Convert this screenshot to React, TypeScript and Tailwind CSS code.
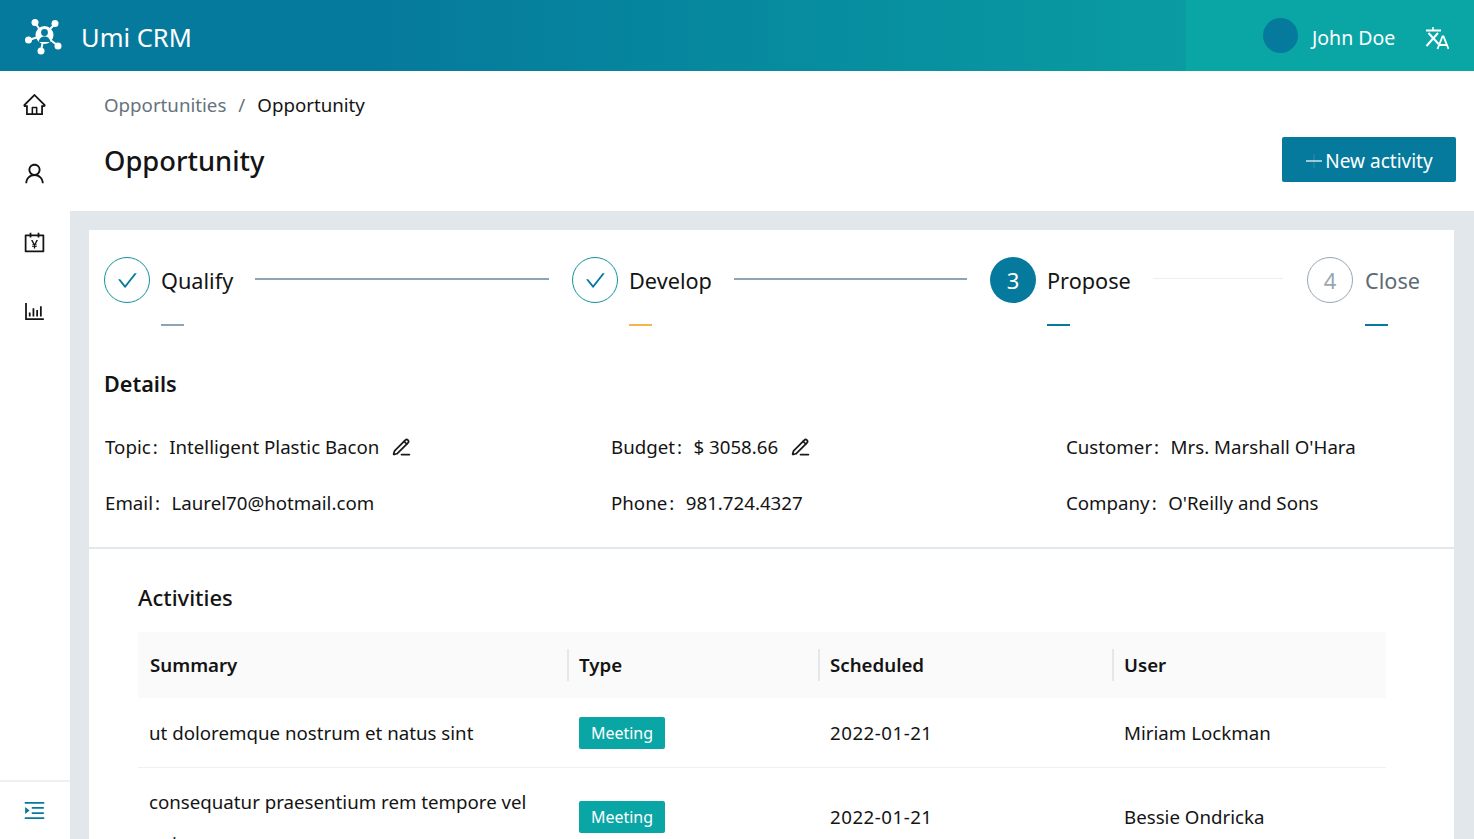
import { AiOutlineHome, AiOutlineUser, AiOutlineAccountBook, AiOutlineBarChart, AiOutlineMenuUnfold, AiOutlineCheck } from "react-icons/ai";
import { LuPencilLine } from "react-icons/lu";

const Logo = () => (
  <svg width="40" height="38" viewBox="0 0 40 38" fill="none" className="text-white">
    <g stroke="currentColor" strokeWidth="2">
      <line x1="20" y1="18" x2="11" y2="6" />
      <line x1="20" y1="18" x2="31" y2="7" />
      <line x1="20" y1="18" x2="5" y2="23" />
      <line x1="20" y1="18" x2="33" y2="28" />
      <line x1="20" y1="18" x2="17" y2="34" />
    </g>
    <g fill="currentColor">
      <circle cx="11" cy="5.500" r="3.500" />
      <circle cx="31" cy="6.500" r="3.500" />
      <circle cx="4.500" cy="23" r="3.500" />
      <circle cx="34" cy="29" r="3.500" />
      <circle cx="17" cy="34" r="3.500" />
      <circle cx="20.500" cy="18" r="9" />
    </g>
    <circle cx="20.500" cy="15.500" r="3.400" fill="#067a9c" />
    <path d="M14.500 25c1-4 3-5.500 6-5.500s5 1.500 6 5.500z" fill="#067a9c" />
  </svg>
);

const Translate = () => (
  <svg width="24" height="24" viewBox="0 0 24 24" fill="none" stroke="white" strokeWidth="2" className="ml-[30px] mt-[5px]">
    <path d="M1 4.500h15" />
    <path d="M8 1v3.500" strokeWidth="1.500" />
    <path d="M3.500 7l10 11" />
    <path d="M13 7L1.500 20" />
    <path d="M12.500 23l5-12.500h1l5 12.500M14.500 19h7" strokeWidth="1.800" />
  </svg>
);

const Step = ({ node, label, labelClass, lineClass, barClass, gap }: { node: React.ReactNode; label: string; labelClass: string; lineClass?: string; barClass: string; gap: string }) => (
  <div className={`flex items-start ${gap}`}>
    {node}
    <div className="ml-[11px] shrink-0 pt-[6px]">
      <div className={`text-[21.7px] leading-[36px] ${labelClass}`}>{label}</div>
      <div className={`mt-[25px] h-[2px] w-[23px] ${barClass}`} />
    </div>
    {lineClass && <div className={`mt-[21px] ml-[22px] ${lineClass}`} />}
  </div>
);

const Check = () => (
  <div className="flex h-[46px] w-[46px] shrink-0 items-center justify-center rounded-full border-[1.5px] border-[#12929f] text-[#067a9c]">
    <AiOutlineCheck size={23} />
  </div>
);

const Field = ({ label, value, edit, w }: { label: string; value: string; edit?: boolean; w: string }) => (
  <div className={`flex h-[56px] items-center pl-[1px] ${w}`}>
    <span>{label}<span className="ml-[2px]">:</span></span>
    <span className="ml-[11.5px]">{value}</span>
    {edit && <LuPencilLine size={21} className="ml-[12px] text-[#1a1a1a]" strokeWidth={2} />}
  </div>
);

const Row = ({ summary, user, h, first }: { summary: string; user: string; h: string; first?: boolean }) => (
  <tr className={`border-b border-[#eef1f3] ${h}`}>
    {first ? (
      <td className="pl-[11px] pr-[30px] pt-[2px] align-middle">{summary}</td>
    ) : (
      <td className="pl-[11px] pr-[30px] pt-[13px] align-top leading-[42px]">{summary}</td>
    )}
    <td className={`pl-[12px] align-middle ${first ? "pt-[2px]" : ""}`}>
      <span className="inline-flex h-[32px] w-[86px] items-center justify-center rounded-[2px] bg-[#0aa6a6] text-[16px] text-white">Meeting</span>
    </td>
    <td className={`pl-[12px] align-middle tracking-[0.5px] ${first ? "pt-[2px]" : ""}`}>2022-01-21</td>
    <td className={`pl-[12px] align-middle ${first ? "pt-[2px]" : ""}`}>{user}</td>
  </tr>
);

const Th = ({ children, sep, w }: { children: string; sep?: boolean; w: string }) => (
  <th className={`${w} relative p-0 pl-[12px] text-left font-semibold`}>
    {sep && <span className="absolute left-0 top-[17px] h-[32px] w-[2px] bg-[#e4e8ea]" />}
    {children}
  </th>
);

export default function App() {
  return (
    <div className="flex h-[839px] flex-col overflow-hidden bg-[#e1e7ea] text-[#141414] [font-family:'Noto_Sans','Open_Sans',sans-serif] text-[18.7px]">
      <header className="flex h-[71px] shrink-0 items-center">
        <div className="flex h-full flex-1 items-center bg-gradient-to-r from-[#067a9c] from-[32%] to-[#0a9ca2] pl-[24px]">
          <Logo />
          <span className="ml-[17px] mt-[3px] text-[25.5px] text-white">Umi CRM</span>
        </div>
        <div className="flex h-full w-[288px] items-center bg-[#0aa6a6] pl-[77px] text-white">
          <span className="h-[35px] w-[35px] rounded-full bg-[#067a9c]" />
          <span className="ml-[14px] mt-[4px] text-[19.5px]">John Doe</span>
          <Translate />
        </div>
      </header>
      <div className="flex min-h-0 flex-1">
        <aside className="flex w-[70px] shrink-0 flex-col bg-white">
          <nav className="flex flex-1 flex-col items-center gap-[44px] pt-[21px] pr-[2px] text-[#141414]">
            <AiOutlineHome size={25} />
            <AiOutlineUser size={25} />
            <AiOutlineAccountBook size={25} />
            <AiOutlineBarChart size={25} />
          </nav>
          <div className="flex h-[59px] items-center justify-center border-t-2 border-[#eef1f3] pr-[2px] text-[#067a9c]">
            <AiOutlineMenuUnfold size={25} />
          </div>
        </aside>
        <main className="min-w-0 flex-1">
          <section className="h-[140px] bg-white pl-[34px] pr-[18px] pt-[19px]">
            <div className="flex h-[30px] items-center">
              <span className="text-[#66727c]">Opportunities</span>
              <span className="mx-[12px] text-[#66727c]">/</span>
              <span>Opportunity</span>
            </div>
            <div className="mt-[17px] flex items-start justify-between">
              <h1 className="mt-[5px] text-[27.3px] font-medium leading-[38px]">Opportunity</h1>
              <button className="flex h-[45px] w-[174px] items-center justify-center rounded-[2px] bg-[#067a9c] pt-[3px] text-[19px] text-white">
                <svg width="18" height="18" viewBox="0 0 18 18" className="mr-[2px]">
                  <line x1="1" y1="9" x2="17" y2="9" stroke="white" strokeWidth="1.2" />
                  <line x1="9" y1="2" x2="9" y2="16" stroke="white" strokeOpacity="0.15" strokeWidth="1" />
                </svg>
                New activity
              </button>
            </div>
          </section>
          <div className="pl-[19px] pr-[20px] pt-[19px]">
            <section className="h-[317px] bg-white px-[15px] pt-[27px]">
              <div className="flex">
                <Step gap="w-[468px]" node={<Check />} label="Qualify" labelClass="" lineClass="mr-[23px] h-[2px] flex-1 bg-[#8ea3b3]" barClass="bg-[#8ea3b3]" />
                <Step gap="w-[418px]" node={<Check />} label="Develop" labelClass="" lineClass="mr-[23px] h-[2px] flex-1 bg-[#8ea3b3]" barClass="bg-[#f5b54a]" />
                <Step gap="w-[317px]" node={<div className="flex h-[46px] w-[46px] shrink-0 items-center justify-center rounded-full bg-[#067a9c] text-[22px] text-white">3</div>} label="Propose" labelClass="" lineClass="mr-[24px] h-[1px] flex-1 bg-[#eceff1]" barClass="bg-[#067a9c]" />
                <Step gap="" node={<div className="flex h-[46px] w-[46px] shrink-0 items-center justify-center rounded-full border-[1.5px] border-[#97a6b3] text-[22px] text-[#97a6b3]">4</div>} label="Close" labelClass="ml-[1px] text-[#5d6b75]" barClass="ml-[1px] bg-[#067a9c]" />
              </div>
              <h2 className="mt-[43px] text-[21.6px] font-semibold leading-[30px]">Details</h2>
              <div className="mt-[20px] flex flex-wrap">
                <Field w="w-[506px]" label="Topic" value="Intelligent Plastic Bacon" edit />
                <Field w="w-[455px]" label="Budget" value="$ 3058.66" edit />
                <Field w="w-[330px]" label="Customer" value="Mrs. Marshall O'Hara" />
                <Field w="w-[506px]" label="Email" value="Laurel70@hotmail.com" />
                <Field w="w-[455px]" label="Phone" value="981.724.4327" />
                <Field w="w-[330px]" label="Company" value="O'Reilly and Sons" />
              </div>
            </section>
            <section className="mt-[2px] h-[400px] bg-white pl-[49px] pr-[68px] pt-[32px]">
              <h2 className="text-[22px] font-medium leading-[32px]">Activities</h2>
              <table className="mt-[19px] w-full table-fixed border-collapse">
                <thead>
                  <tr className="h-[66px] bg-[#fafafa]">
                    <Th w="w-[429px]">Summary</Th>
                    <Th w="w-[251px]" sep>Type</Th>
                    <Th w="w-[294px]" sep>Scheduled</Th>
                    <Th w="w-[274px]" sep>User</Th>
                  </tr>
                </thead>
                <tbody>
                  <Row first h="h-[69px]" summary="ut doloremque nostrum et natus sint" user="Miriam Lockman" />
                  <Row h="h-[100px]" summary="consequatur praesentium rem tempore vel quisquam" user="Bessie Ondricka" />
                </tbody>
              </table>
            </section>
          </div>
        </main>
      </div>
    </div>
  );
}
